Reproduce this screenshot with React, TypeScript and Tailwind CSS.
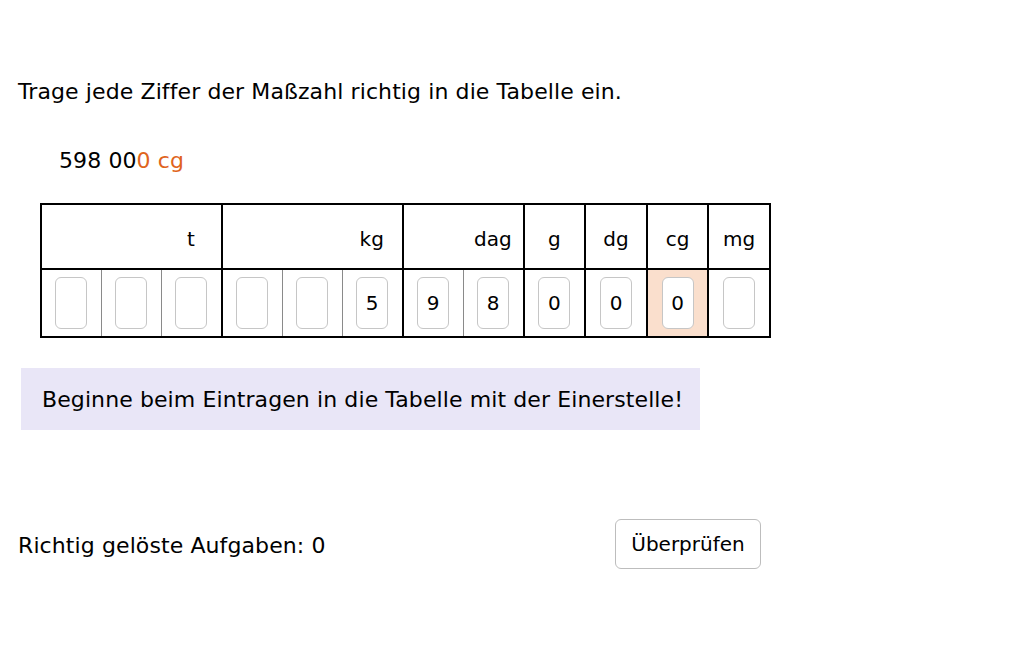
import React from "react";

const groups = [
  { label: "t", grow: "flex-[3]", vals: ["", "", ""] },
  { label: "kg", grow: "flex-[3]", vals: ["", "", "5"] },
  { label: "dag", grow: "flex-[2]", vals: ["9", "8"] },
  { label: "g", grow: "flex-[1]", vals: ["0"] },
  { label: "dg", grow: "flex-[1]", vals: ["0"] },
  { label: "cg", grow: "flex-[1]", vals: ["0"], hl: true },
  { label: "mg", grow: "flex-[1]", vals: [""] },
];

function Box({ v }: { v: string }) {
  return (
    <div className="w-[32px] h-[52px] rounded-[6px] border border-[#c6c6c6] bg-white flex items-center justify-center text-[20px] text-black">
      {v}
    </div>
  );
}

export default function App() {
  return (
    <div
      className="w-[1032px] h-[645px] bg-white text-black relative"
      style={{ fontFamily: '"DejaVu Sans", "Liberation Sans", sans-serif' }}
    >
      <div className="pl-[18px] pt-[76px]">
        <div className="text-[22px] leading-[32px] tracking-[0.1px]">
          Trage jede Ziffer der Maßzahl richtig in die Tabelle ein.
        </div>
        <div className="pl-[41px] mt-[37px] text-[22px] leading-[32px] tracking-[0.1px]">
          598 00<span className="text-[#e0641c]">0 cg</span>
        </div>
        <div className="ml-[22px] mt-[26px] flex w-[731px] border-2 border-black">
          {groups.map((g, gi) => (
            <div
              key={gi}
              className={`${g.grow} min-w-0 flex flex-col ${gi > 0 ? "border-l-2 border-black" : ""}`}
            >
              <div className="flex h-[65px] border-b-2 border-black">
                {g.vals.map((_, i) => (
                  <div
                    key={i}
                    className="flex-1 flex items-center justify-center pt-[4px] text-[20px]"
                  >
                    {i === g.vals.length - 1 ? g.label : ""}
                  </div>
                ))}
              </div>
              <div className="flex h-[66px]">
                {g.vals.map((v, i) => (
                  <div
                    key={i}
                    className={`flex-1 flex items-center justify-center ${
                      i > 0 ? "border-l border-[#8a8a8a]" : ""
                    } ${g.hl ? "bg-[#fadfcd]" : ""}`}
                  >
                    <Box v={v} />
                  </div>
                ))}
              </div>
            </div>
          ))}
        </div>
        <div className="ml-[3px] mt-[30px] w-[679px] h-[62px] bg-[#e9e6f7] flex items-center pl-[21px] text-[22px] tracking-[0.1px]">
          Beginne beim Eintragen in die Tabelle mit der Einerstelle!
        </div>
        <div className="mt-[89px] flex items-center w-[743px] justify-between">
          <div className="text-[22px] tracking-[0.1px] pt-[2px]">Richtig gelöste Aufgaben: 0</div>
          <button className="w-[146px] h-[50px] rounded-[6px] border border-[#bdbdbd] bg-white text-[20px] text-black">
            Überprüfen
          </button>
        </div>
      </div>
    </div>
  );
}
